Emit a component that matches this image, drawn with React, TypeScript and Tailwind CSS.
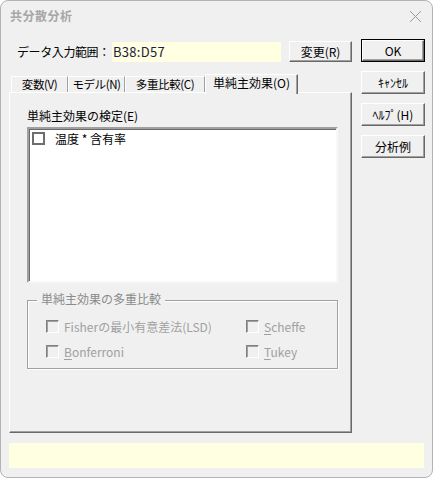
import type { ReactNode } from "react";

const FONT = { fontFamily: '"Noto Sans CJK JP", "Noto Sans", sans-serif' };

type ButtonProps = {
  label: string;
  isDefault?: boolean;
  className?: string;
};

function ClassicButton({ label, isDefault = false, className = "" }: ButtonProps) {
  const face = (
    <div className="flex h-full w-full items-center justify-center whitespace-nowrap border-t border-l border-white border-r border-b border-r-[#696969] border-b-[#696969] bg-[#f0f0f0] text-[12px] leading-none text-black shadow-[inset_-1px_-1px_0_#a0a0a0]">
      {label}
    </div>
  );

  if (isDefault) {
    return <div className={`border border-black ${className}`}>{face}</div>;
  }
  return <div className={className}>{face}</div>;
}

function GrayCheck({ children }: { children: ReactNode }) {
  return (
    <div className="flex items-center gap-[5px] whitespace-nowrap text-[12px] leading-none text-[#a0a0a0]">
      <span className="block size-[13px] border-t border-l border-[#808080] border-r border-b border-r-white border-b-white bg-[#f0f0f0] shadow-[inset_1px_1px_0_#a0a0a0]" />
      <span>{children}</span>
    </div>
  );
}

const TABS = [
  { label: "変数(V)", width: "w-[57px]" },
  { label: "モデル(N)", width: "w-[57px]" },
  { label: "多重比較(C)", width: "w-[80px]" },
];

export default function App() {
  return (
    <div className="h-[478px] w-[433px] bg-white" style={FONT}>
      <div className="flex h-[478px] w-[433px] flex-col rounded-[8px] border border-[#b4b4b4] bg-[#f0f0f0]">
        {/* title bar */}
        <div className="flex h-[30px] items-center justify-between pr-[10px] pl-[9px]">
          <span className="text-[12px] font-bold tracking-[0.5px] text-[#a6a6a6]">共分散分析</span>
          <svg width="13" height="13" viewBox="0 0 13 13" aria-hidden>
            <path d="M1 1 L12 12 M12 1 L1 12" stroke="#9a9a9a" strokeWidth="1" fill="none" />
          </svg>
        </div>

        <div className="flex gap-[9px] pl-[8px]">
          {/* left column */}
          <div className="flex w-[343px] flex-col">
            <div className="mt-[10px] flex h-[21px] items-center">
              <span className="ml-[8px] w-[95px] whitespace-nowrap text-[12px] leading-none tracking-[-0.4px] text-black">
                データ入力範囲：
              </span>
              <div className="flex h-[20px] w-[169px] items-center bg-[#ffffe1] pl-[1px] text-[13px] leading-none tracking-[0.3px] text-[#1c1c40]">
                B38:D57
              </div>
              <ClassicButton label="変更(R)" className="ml-[8px] h-[21px] w-[63px]" />
            </div>

            {/* tabs */}
            <div className="relative z-10 mt-[12px] -mb-[2px] flex h-[20px] items-start pl-[2px]">
              {TABS.map((tab) => (
                <div
                  key={tab.label}
                  className={`mt-[2px] flex h-[16px] ${tab.width} items-center justify-center whitespace-nowrap border-t border-l border-white border-r border-r-[#a0a0a0] text-[11.5px] leading-none tracking-[-0.4px] text-black`}
                >
                  {tab.label}
                </div>
              ))}
              <div className="flex h-[20px] w-[93px] items-start justify-center whitespace-nowrap border-t border-l border-white border-r border-r-[#696969] bg-[#f0f0f0] pt-[2px] text-[12px] leading-none text-black shadow-[inset_-1px_0_0_#a0a0a0]">
                単純主効果(O)
              </div>
            </div>

            {/* tab panel */}
            <div className="flex h-[341px] flex-col border-t border-l border-white border-r border-b border-r-[#696969] border-b-[#696969] px-[17px] pt-[17px] shadow-[inset_-1px_-1px_0_#a0a0a0]">
              <span className="text-[12px] leading-none text-black">単純主効果の検定(E)</span>
              <div className="mt-[5px] h-[156px] w-[311px] border-2 border-t-[#a0a0a0] border-l-[#a0a0a0] border-r-[#f8f8f8] border-b-[#f8f8f8] bg-white shadow-[inset_1px_1px_0_#696969]">
                <div className="flex items-center pt-[3px] pl-[3px]">
                  <span className="block size-[13px] border-2 border-[#6d6d6d] bg-white" />
                  <span className="ml-[10px] text-[12px] leading-none text-black">温度 * 含有率</span>
                </div>
              </div>

              {/* group box */}
              <div className="relative mt-[17px] h-[69px] w-[311px] border border-[#a0a0a0] shadow-[inset_1px_1px_0_white,1px_1px_0_white]">
                <span className="absolute -top-[8px] left-[9px] bg-[#f0f0f0] px-[4px] text-[12px] leading-none text-[#8a8a8a]">
                  単純主効果の多重比較
                </span>
                <div className="grid grid-cols-[200px_1fr] gap-y-[12px] pt-[19px] pl-[18px]">
                  <GrayCheck>Fisherの最小有意差法(LSD)</GrayCheck>
                  <GrayCheck>
                    <span className="underline underline-offset-2">S</span>cheffe
                  </GrayCheck>
                  <GrayCheck>
                    <span className="underline underline-offset-2">B</span>onferroni
                  </GrayCheck>
                  <GrayCheck>
                    <span className="underline underline-offset-2">T</span>ukey
                  </GrayCheck>
                </div>
              </div>
            </div>
          </div>

          {/* right column */}
          <div className="flex w-[64px] flex-col gap-[9px] pt-[8px]">
            <ClassicButton label="OK" isDefault className="h-[23px] w-[64px]" />
            <ClassicButton label="ｷｬﾝｾﾙ" className="h-[23px] w-[64px]" />
            <ClassicButton label="ﾍﾙﾌﾟ(H)" className="h-[23px] w-[64px]" />
            <ClassicButton label="分析例" className="h-[23px] w-[64px]" />
          </div>
        </div>

        {/* status bar */}
        <div className="mx-[8px] mt-[10px] h-[25px] bg-[#ffffe1]" />
      </div>
    </div>
  );
}
